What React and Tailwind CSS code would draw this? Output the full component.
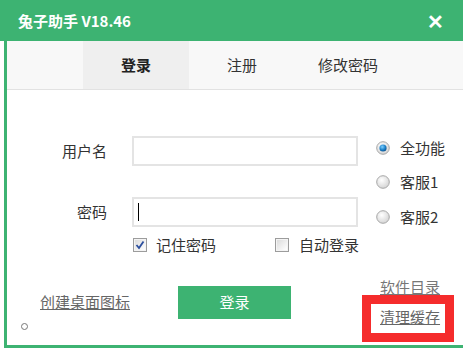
import React from "react";

const font = { fontFamily: '"Noto Sans CJK SC", "Microsoft YaHei", sans-serif' };

function Radio({ checked }) {
  return (
    <svg width="14" height="14" viewBox="0 0 14 14">
      <defs>
        <radialGradient id="rg1" cx="40%" cy="35%" r="70%">
          <stop offset="0%" stopColor="#ffffff" />
          <stop offset="100%" stopColor="#d2d2d2" />
        </radialGradient>
        <radialGradient id="rg2" cx="40%" cy="35%" r="70%">
          <stop offset="0%" stopColor="#7fd0ff" />
          <stop offset="60%" stopColor="#1a7fc7" />
          <stop offset="100%" stopColor="#0b4f8a" />
        </radialGradient>
      </defs>
      <circle cx="7" cy="7" r="6.3" fill="url(#rg1)" stroke="#a8a8a8" strokeWidth="1" />
      {checked && <circle cx="7" cy="7" r="3.6" fill="url(#rg2)" />}
    </svg>
  );
}

function Check({ checked }) {
  return (
    <svg width="14" height="14" viewBox="0 0 14 14">
      <defs>
        <linearGradient id="cg" x1="0" y1="0" x2="1" y2="1">
          <stop offset="0%" stopColor="#dcdcdc" />
          <stop offset="100%" stopColor="#ffffff" />
        </linearGradient>
      </defs>
      <rect x="0.5" y="0.5" width="13" height="13" fill="#f4f4f4" stroke="#9c9c9c" />
      <rect x="2" y="2" width="10" height="10" fill="url(#cg)" />
      {checked && (
        <path d="M3.5 7 L6 10 L10.5 3.5" fill="none" stroke="#2c4f9e" strokeWidth="1.8" />
      )}
    </svg>
  );
}

export default function App() {
  return (
    <div className="relative w-[463px] h-[348px] bg-white overflow-hidden text-[#333]" style={font}>
      {/* Header */}
      <div className="h-[41px] bg-[#3db372] flex items-center justify-between pl-[18px] pr-[19px]">
        <span className="text-white font-bold text-[15px] leading-none">兔子助手 V18.46</span>
        <span className="text-white font-bold text-[20px] leading-none">✕</span>
      </div>
      {/* Body */}
      <div className="ml-[4px] h-[307px] border-l-[3px] border-b-[3px] border-[#3db372] flex flex-col">
        {/* Tabs */}
        <div className="h-[49px] bg-[#f8f8f8] border-b border-[#e2e2e2] flex pl-[76px] text-[15px]">
          <div className="w-[106px] bg-[#efefef] flex items-center justify-center font-bold text-[#222]">登录</div>
          <div className="w-[106px] flex items-center justify-center text-[#333]">注册</div>
          <div className="w-[106px] flex items-center justify-center text-[#333]">修改密码</div>
        </div>
        {/* Form */}
        <div className="flex pt-[46px]">
          <div className="flex flex-col">
            <div className="flex items-center h-[30px]">
              <span className="w-[100px] text-right text-[15px]">用户名</span>
              <div className="ml-[25px] w-[226px] h-[30px] border-2 border-[#e4e4e4] bg-white" />
            </div>
            <div className="flex items-center h-[30px] mt-[31px]">
              <span className="w-[100px] text-right text-[15px]">密码</span>
              <div className="ml-[25px] w-[226px] h-[30px] border-2 border-[#e4e4e4] bg-white flex items-center pl-[4px]">
                <div className="w-[1px] h-[18px] bg-black" />
              </div>
            </div>
            <div className="flex items-center h-[20px] mt-[8px] text-[15px]">
              <div className="ml-[126px] flex items-center">
                <Check checked />
                <span className="ml-[9px]">记住密码</span>
              </div>
              <div className="ml-[59px] flex items-center">
                <Check />
                <span className="ml-[10px]">自动登录</span>
              </div>
            </div>
          </div>
          <div className="ml-[17px] flex flex-col text-[15px]">
            <div className="h-[24px] flex items-center">
              <Radio checked />
              <span className="ml-[10px]">全功能</span>
            </div>
            <div className="h-[24px] mt-[10px] flex items-center">
              <Radio />
              <span className="ml-[10px]">客服1</span>
            </div>
            <div className="h-[24px] mt-[11px] flex items-center">
              <Radio />
              <span className="ml-[10px]">客服2</span>
            </div>
          </div>
        </div>
        {/* Bottom row */}
        <div className="flex items-start mt-[22px] text-[15px]">
          <div className="flex flex-col">
            <span className="ml-[33px] mt-[15px] h-[20px] leading-[20px] underline text-[#666]">创建桌面图标</span>
            <div className="ml-[14px] mt-[11px] w-[7px] h-[7px] rounded-full border-[1.5px] border-[#777]" />
          </div>
          <div className="ml-[48px] mt-[9px] w-[113px] h-[33px] bg-[#3db372] flex items-center justify-center text-white">登录</div>
          <div className="ml-[89px] flex flex-col">
            <span className="h-[20px] leading-[20px] underline text-[#777]">软件目录</span>
            <span className="mt-[10px] h-[20px] leading-[20px] underline text-[#666]">清理缓存</span>
          </div>
        </div>
      </div>
      {/* Red annotation box */}
      <div className="absolute left-[362px] top-[295px] w-[92px] h-[47px] border-[9px] border-[#f52c2c]" />
    </div>
  );
}
